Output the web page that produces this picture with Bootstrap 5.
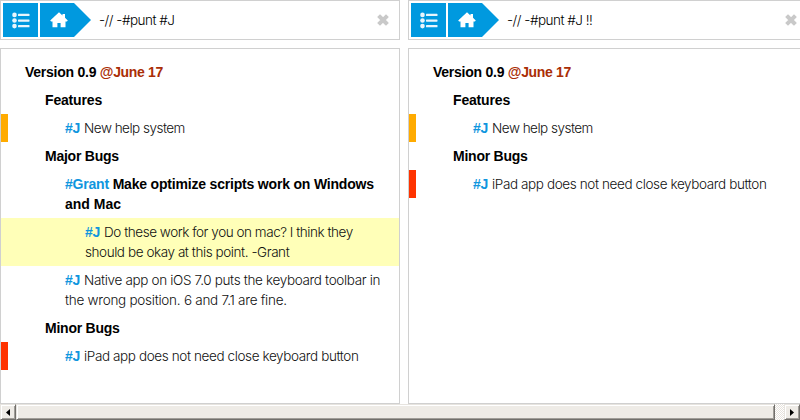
<!DOCTYPE html>
<html lang="en">
<head>
<meta charset="utf-8">
<title>Outline</title>
<link href="https://cdn.jsdelivr.net/npm/bootstrap@5.3.0/dist/css/bootstrap.min.css" rel="stylesheet">
<style>
body{width:800px;height:420px;background:#fff;color:#000;font:14px/20px "Liberation Sans",Arial,sans-serif}
.pane{width:400px}
.frame{border:1px solid #d0d0d0}
.bar{height:40px;padding:2px}
.tool{width:35px;height:34px;background:#0099df}
.home{width:51px;height:34px;background:#0099df;clip-path:polygon(0 0,34px 0,51px 50%,34px 100%,0 100%);padding-left:10px;margin-left:2px}
.query{font-family:Inter,sans-serif;font-weight:300;font-size:13.5px;letter-spacing:-.5px;color:#000;margin-left:8px}
.sheet{height:356px;padding-top:9px}
.line{padding:4px 0 4px 24px}
.in1{padding-left:44px}.in2{padding-left:64px}.in3{padding-left:84px}
.light{color:#111}
.light [class^=a]{font-family:Inter,sans-serif;font-weight:300;font-size:13.5px}
.t1{letter-spacing:-.25px}.t2{letter-spacing:-.17px}.t3{letter-spacing:-.24px}.t4{letter-spacing:-.19px}
.a1{letter-spacing:-.51px}.a2{letter-spacing:-.46px}.a3{letter-spacing:-.43px}.a4{letter-spacing:-.34px}.a5{letter-spacing:-.26px}.a6{letter-spacing:-.39px}
.tag{font-weight:700;color:#0f96de;letter-spacing:-.2px}
.date{color:#aa2e06;letter-spacing:-.34px}
.orange{background:linear-gradient(#ffab00,#ffab00) 0 0/7px 100% no-repeat}
.red{background:linear-gradient(#ff3300,#ff3300) 0 0/7px 100% no-repeat}
.note{background:#ffffb8}
.scroller{height:16px;background:#ece9e4 conic-gradient(#fff 25%,#e6e2dc 0 50%,#fff 0 75%,#e6e2dc 0) 0 0/2px 2px}
.face{background:#eeebe6;border:1px solid;border-color:#e7e4df #716f6b #716f6b #e7e4df;box-shadow:inset 1px 1px #fff,inset -1px -1px #a09d98}
.arrow{width:16px}
.thumb{width:759px}
.gapx{width:9px}
</style>
<script src="https://cdn.jsdelivr.net/npm/bootstrap@5.3.0/dist/js/bootstrap.bundle.min.js"></script>
</head>
<body class="overflow-hidden d-flex flex-column">
<svg class="d-none">
<symbol id="list" viewBox="0 0 18 17"><g fill="#e9f5fc"><circle cx="2.5" cy="2.9" r="2.3"/><circle cx="2.5" cy="8.5" r="2.3"/><circle cx="2.5" cy="14.1" r="2.3"/><rect x="6" y="1.8" width="11.5" height="2.3" rx=".6"/><rect x="6" y="7.4" width="11.5" height="2.3" rx=".6"/><rect x="6" y="13" width="11.5" height="2.3" rx=".6"/></g></symbol>
<symbol id="house" viewBox="0 0 18 16"><path fill="#fff" d="M9 .3 12.500 3.500V2H15V5.800L17.800 8.600 16.900 9.600H15.500V15.300H10.600V11H7.400V15.300H2.500V9.600H1.100L.2 8.600Z"/></symbol>
<symbol id="close" viewBox="0 0 12 12"><path d="M3 3 9 9M9 3 3 9" stroke="#c9c9c9" stroke-width="4" stroke-linecap="square"/></symbol>
</svg>
<main class="d-flex gap-2 text-nowrap">
<section class="pane flex-shrink-0">
<header class="frame bar d-flex align-items-center mb-2">
<div class="tool d-flex align-items-center justify-content-center"><svg width="18" height="17"><use href="#list"/></svg></div>
<div class="home d-flex align-items-center"><svg width="18" height="16"><use href="#house"/></svg></div>
<span class="query">-// -#punt #J</span>
<svg class="ms-auto me-2" width="12" height="12"><use href="#close"/></svg>
</header>
<div class="frame sheet">
<div class="line fw-bold"><span class="t1">Version 0.9 <span class="date">@June 17</span></span></div>
<div class="line in1 fw-bold"><span class="t2">Features</span></div>
<div class="line in2 light orange"><span class="tag">#J</span> <span class="a1">New help system</span></div>
<div class="line in1 fw-bold"><span class="t3">Major Bugs</span></div>
<div class="line in2 fw-bold"><span class="t4"><span class="tag">#Grant</span> Make optimize scripts work on Windows</span><br>and Mac</div>
<div class="line in3 light note"><span class="tag">#J</span> <span class="a2">Do these work for you on mac? I think they</span><br><span class="a3">should be okay at this point. -Grant</span></div>
<div class="line in2 light"><span class="tag">#J</span> <span class="a4">Native app on iOS 7.0 puts the keyboard toolbar in</span><br><span class="a5">the wrong position. 6 and 7.1 are fine.</span></div>
<div class="line in1 fw-bold"><span class="t3">Minor Bugs</span></div>
<div class="line in2 light red"><span class="tag">#J</span> <span class="a6">iPad app does not need close keyboard button</span></div>
</div>
</section>
<section class="pane flex-shrink-0">
<header class="frame bar d-flex align-items-center mb-2">
<div class="tool d-flex align-items-center justify-content-center"><svg width="18" height="17"><use href="#list"/></svg></div>
<div class="home d-flex align-items-center"><svg width="18" height="16"><use href="#house"/></svg></div>
<span class="query">-// -#punt #J !!</span>
<svg class="ms-auto me-2" width="12" height="12"><use href="#close"/></svg>
</header>
<div class="frame sheet">
<div class="line fw-bold"><span class="t1">Version 0.9 <span class="date">@June 17</span></span></div>
<div class="line in1 fw-bold"><span class="t2">Features</span></div>
<div class="line in2 light orange"><span class="tag">#J</span> <span class="a1">New help system</span></div>
<div class="line in1 fw-bold"><span class="t3">Minor Bugs</span></div>
<div class="line in2 light red"><span class="tag">#J</span> <span class="a6">iPad app does not need close keyboard button</span></div>
</div>
</section>
</main>
<div class="scroller d-flex flex-shrink-0">
<div class="face arrow d-flex align-items-center justify-content-center"><svg width="4" height="7"><path d="M4 0V7L0 3.500Z"/></svg></div>
<div class="face thumb"></div><div class="gapx"></div>
<div class="face arrow d-flex align-items-center justify-content-center"><svg width="4" height="7"><path d="M0 0V7L4 3.500Z"/></svg></div>
</div>
</body>
</html>
